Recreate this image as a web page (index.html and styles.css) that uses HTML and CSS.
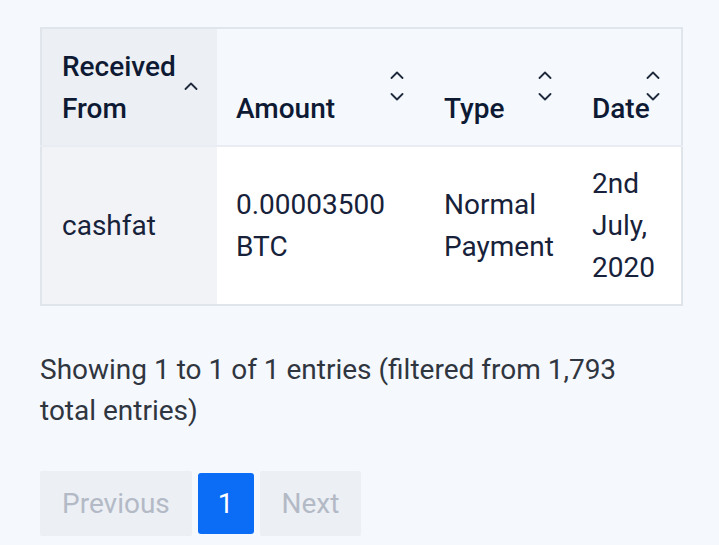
FILE: index.html
```html
<!DOCTYPE html>
<html lang="en">
<head>
    <meta charset="UTF-8">
    <meta name="viewport" content="width=device-width, initial-scale=1.0">
    <title>Payments Received</title>
    <link rel="stylesheet" href="styles.css">
</head>

<body>
    <div id="payments">
        <table class="data-table">
            <colgroup>
                <col class="col-from">
                <col class="col-amount">
                <col class="col-type">
                <col class="col-date">
            </colgroup>
            <thead>
                <tr>
                    <th class="sorted">Received From
                        <svg class="sort sort-only" width="14" height="8" viewBox="0 0 14 8"><polyline points="1.5,7 7,1.5 12.5,7"/></svg>
                    </th>
                    <th>Amount
                        <svg class="sort sort-up" width="14" height="8" viewBox="0 0 14 8"><polyline points="1.5,7 7,1.5 12.5,7"/></svg>
                        <svg class="sort sort-down" width="14" height="8" viewBox="0 0 14 8"><polyline points="1.5,1 7,6.5 12.5,1"/></svg>
                    </th>
                    <th>Type
                        <svg class="sort sort-up" width="14" height="8" viewBox="0 0 14 8"><polyline points="1.5,7 7,1.5 12.5,7"/></svg>
                        <svg class="sort sort-down" width="14" height="8" viewBox="0 0 14 8"><polyline points="1.5,1 7,6.5 12.5,1"/></svg>
                    </th>
                    <th>Date
                        <svg class="sort sort-up" width="14" height="8" viewBox="0 0 14 8"><polyline points="1.5,7 7,1.5 12.5,7"/></svg>
                        <svg class="sort sort-down" width="14" height="8" viewBox="0 0 14 8"><polyline points="1.5,1 7,6.5 12.5,1"/></svg>
                    </th>
                </tr>
            </thead>
            <tbody>
                <tr>
                    <td class="sorted">cashfat</td>
                    <td>0.00003500 BTC</td>
                    <td>Normal Payment</td>
                    <td>2nd July, 2020</td>
                </tr>
            </tbody>
        </table>

        <p class="table-info">Showing 1 to 1 of 1 entries (filtered from 1,793 total entries)</p>

        <div class="pagination">
            <span class="page-btn disabled">Previous</span>
            <span class="page-btn active">1</span>
            <span class="page-btn disabled">Next</span>
        </div>
    </div>
</body>
</html>
```

FILE: styles.css
```css
body {
    font-family: Roboto, "Noto Sans", sans-serif;
    background-color: #f5f8fd;
    margin: 0;
    padding: 0;
    color: #15213a;
}

#payments {
    padding: 27px 0 0 40px;
}

.data-table {
    border-collapse: collapse;
    table-layout: fixed;
    width: 643px;
    border: 2px solid #e0e4eb;
    font-size: 28px;
    line-height: 42px;
}

.col-from { width: 176px; }
.col-amount { width: 208px; }
.col-type { width: 148px; }
.col-date { width: 109px; }

.data-table th {
    position: relative;
    text-align: left;
    vertical-align: bottom;
    font-weight: 500;
    color: #0e1a33;
    padding: 17px 20px 15px 19px;
    background: #f5f8fd;
    border-bottom: 2px solid #e9edf3;
}

.data-table th.sorted {
    background: #eceff4;
    padding-left: 20px;
}

.data-table td {
    vertical-align: middle;
    padding: 16px 8px 15px 19px;
    background: #fff;
    color: #17223a;
}

.data-table td.sorted {
    background: #f1f3f7;
    padding-left: 20px;
}

.sort {
    position: absolute;
    right: 21px;
    fill: none;
    stroke: #1f2a3c;
    stroke-width: 1.8;
    stroke-linecap: round;
    stroke-linejoin: round;
}

.sort-up { top: 42px; }
.sort-down { top: 64px; }
.sort-only { top: 53px; right: 19px; }

.table-info {
    margin: 43px 0 40px;
    font-size: 28px;
    line-height: 41px;
    color: #30363f;
    width: 600px;
}

.pagination {
    display: flex;
    align-items: center;
    gap: 6px;
}

.page-btn {
    font-size: 28px;
    line-height: 65px;
    padding: 0 22px;
    border-radius: 2px;
}

.page-btn.disabled {
    background: #eceff4;
    color: #b3bac6;
}

.page-btn.active {
    background: #0b6cf6;
    color: #fff;
    line-height: 61px;
    padding: 0 20px;
    border-radius: 3px;
}
```
